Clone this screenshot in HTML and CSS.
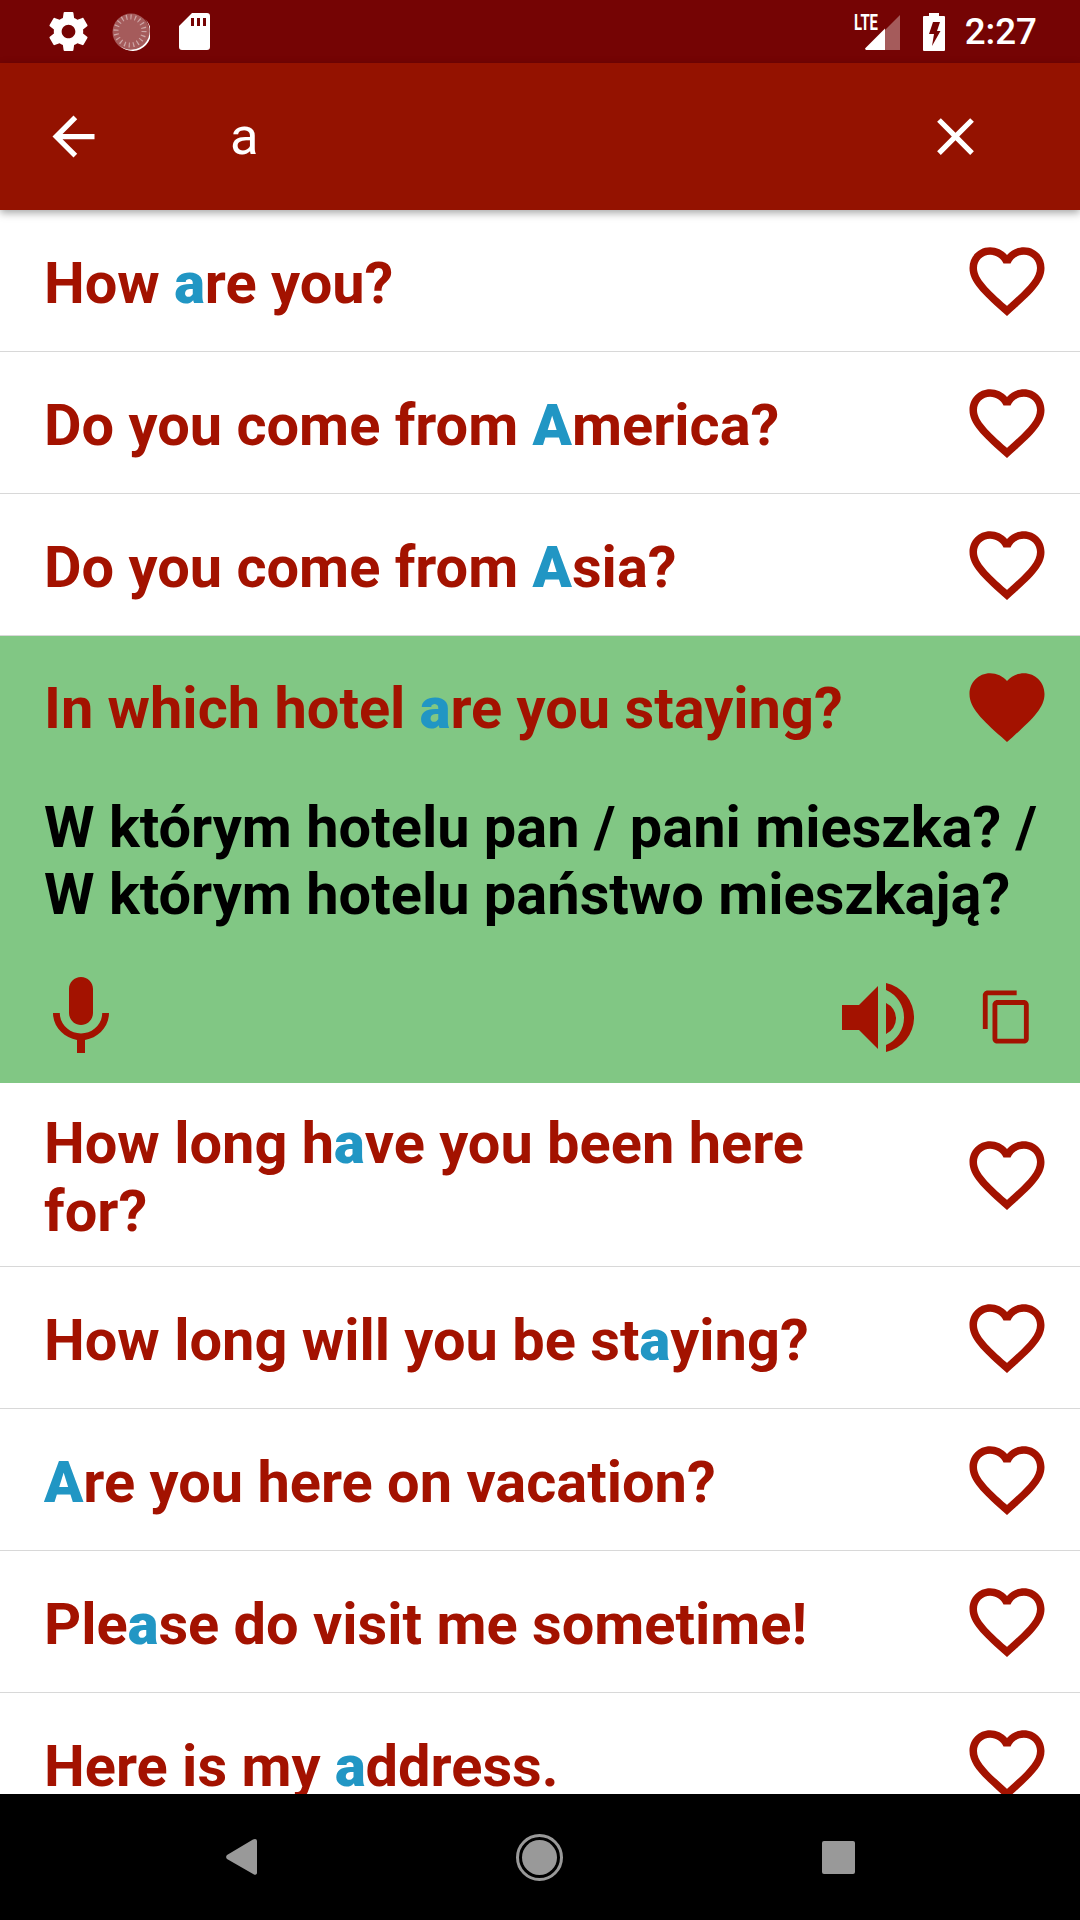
FILE: index.html

```html
<!doctype html>
<html>
<head>
<meta charset="utf-8">
<title>Phrases search</title>
<link rel="stylesheet" href="styles.css">
</head>
<body>
<svg class="defs">
	<symbol id="heart" viewBox="0 0 24 24"><path d="M16.5 3c-1.74 0-3.41.81-4.5 2.09C10.91 3.81 9.24 3 7.5 3 4.42 3 2 5.42 2 8.5c0 3.78 3.4 6.86 8.55 11.54L12 21.35l1.45-1.32C18.6 15.36 22 12.28 22 8.5 22 5.42 19.58 3 16.5 3zm-4.4 15.55l-.1.1-.1-.1C7.14 14.24 4 11.39 4 8.5 4 6.5 5.5 5 7.5 5c1.54 0 3.04.99 3.57 2.36h1.87C13.46 5.99 14.96 5 16.5 5c2 0 3.5 1.5 3.5 3.5 0 2.89-3.14 5.74-7.9 10.05z"/></symbol>
	<symbol id="heart-full" viewBox="0 0 24 24"><path d="M12 21.35l-1.45-1.32C5.4 15.36 2 12.28 2 8.5 2 5.42 4.42 3 7.5 3c1.74 0 3.41.81 4.5 2.09C13.09 3.81 14.76 3 16.5 3 19.58 3 22 5.42 22 8.5c0 3.78-3.4 6.86-8.55 11.54L12 21.35z"/></symbol>
</svg>

<div class="status">
	<svg class="ic-gear" viewBox="0 0 24 24"><path d="M19.43 12.98c.04-.32.07-.64.07-.98s-.03-.66-.07-.98l2.11-1.65c.19-.15.24-.42.12-.64l-2-3.46c-.12-.22-.39-.3-.61-.22l-2.49 1c-.52-.4-1.08-.73-1.69-.98l-.38-2.65C14.46 2.18 14.25 2 14 2h-4c-.25 0-.46.18-.49.42l-.38 2.65c-.61.25-1.17.59-1.69.98l-2.49-1c-.23-.09-.49 0-.61.22l-2 3.46c-.13.22-.07.49.12.64l2.11 1.65c-.04.32-.07.65-.07.98s.03.66.07.98l-2.11 1.65c-.19.15-.24.42-.12.64l2 3.46c.12.22.39.3.61.22l2.49-1c.52.4 1.08.73 1.69.98l.38 2.65c.03.24.24.42.49.42h4c.25 0 .46-.18.49-.42l.38-2.65c.61-.25 1.17-.59 1.69-.98l2.49 1c.23.09.49 0 .61-.22l2-3.46c.12-.22.07-.49-.12-.64l-2.11-1.65zM12 15.5c-1.93 0-3.5-1.57-3.5-3.5s1.57-3.5 3.5-3.5 3.5 1.57 3.5 3.5-1.57 3.5-3.5 3.5z"/></svg>
	<svg class="ic-loader" viewBox="0 0 38 38">
		<circle cx="19" cy="19" r="18.5" fill="#fff" opacity=".35"/>
		<path d="M33 6a18.5 18.5 0 0 1-25 27a17.5 17.5 0 0 0 25-27z" fill="#fff"/>
		<circle cx="18" cy="18" r="14" fill="none" stroke="#fff" stroke-opacity=".45" stroke-width="5" stroke-dasharray="1.2 3.2"/>
	</svg>
	<svg class="ic-sd" viewBox="0 0 31 37"><path fill-rule="evenodd" d="M13 0h15a3 3 0 0 1 3 3v31a3 3 0 0 1-3 3H3a3 3 0 0 1-3-3V13zM12 5v8h3V5zm6 0v8h3V5zm6 0v8h3V5z"/></svg>
	<span class="status-gap"></span>
	<svg class="ic-signal" viewBox="0 -12 46 63">
		<text x="0" y="18" font-size="22" font-weight="700" textLength="24" lengthAdjust="spacingAndGlyphs">LTE</text>
		<path d="M11 38L46 3v35z" opacity=".35"/>
		<path d="M11 36.5l20-20V38H12z"/>
	</svg>
	<svg class="ic-batt" viewBox="0 0 22 38"><path fill-rule="evenodd" d="M6 0h10v3h5a1 1 0 0 1 1 1v33a1 1 0 0 1-1 1H1a1 1 0 0 1-1-1V4a1 1 0 0 1 1-1h5zM10 9L6 21h5L9 33l8.500-15H14l3-9z"/></svg>
	<span class="time">2:27</span>
</div>

<div class="toolbar">
	<svg class="ic-bar" viewBox="0 0 24 24"><path d="M20 11H7.83l5.59-5.59L12 4l-8 8 8 8 1.41-1.41L7.83 13H20v-2z"/></svg>
	<span class="query">a</span>
	<svg class="ic-bar" viewBox="0 0 24 24"><path d="M19 6.41L17.59 5 12 10.59 6.41 5 5 6.41 10.59 12 5 17.59 6.41 19 12 13.41 17.59 19 19 17.59 13.41 12z"/></svg>
</div>

<div class="list">
	<div class="row">
		<div class="title">How <b>a</b>re you?</div>
		<svg class="heart"><use href="#heart"/></svg>
	</div>
	<div class="row">
		<div class="title">Do you come from <b>A</b>merica?</div>
		<svg class="heart"><use href="#heart"/></svg>
	</div>
	<div class="row">
		<div class="title">Do you come from <b>A</b>sia?</div>
		<svg class="heart"><use href="#heart"/></svg>
	</div>
	<div class="open">
		<div class="open-head">
			<div class="title">In which hotel <b>a</b>re you staying?</div>
			<svg class="heart"><use href="#heart-full"/></svg>
		</div>
		<div class="trans">W którym hotelu pan / pani mieszka? / W którym hotelu państwo mieszkają?</div>
		<div class="tools">
			<svg class="ic-mic" viewBox="0 0 24 24"><path d="M12 14c1.66 0 3-1.34 3-3V5c0-1.66-1.34-3-3-3S9 3.34 9 5v6c0 1.66 1.34 3 3 3zm5.3-3c0 3-2.54 5.1-5.3 5.1S6.7 14 6.7 11H5c0 3.41 2.72 6.23 6 6.72V21h2v-3.28c3.28-.48 6-3.3 6-6.72h-1.7z"/></svg>
			<svg class="ic-sound" viewBox="0 0 72 69"><path d="M0 22h17L36 3v63L17 47H0zM44 20A17 17 0 0 1 44 51zM44 0A35.250 35.250 0 0 1 44 69V62A30 30 0 0 0 44 7z"/></svg>
			<svg class="ic-copy" viewBox="0 0 24 24"><path d="M16 1H4c-1.1 0-2 .9-2 2v14h2V3h12V1zm3 4H8c-1.1 0-2 .9-2 2v14c0 1.1.9 2 2 2h11c1.1 0 2-.9 2-2V7c0-1.1-.9-2-2-2zm0 16H8V7h11v14z"/></svg>
		</div>
	</div>
	<div class="row">
		<div class="title">How long h<b>a</b>ve you been here for?</div>
		<svg class="heart"><use href="#heart"/></svg>
	</div>
	<div class="row">
		<div class="title">How long will you be st<b>a</b>ying?</div>
		<svg class="heart"><use href="#heart"/></svg>
	</div>
	<div class="row">
		<div class="title"><b>A</b>re you here on vacation?</div>
		<svg class="heart"><use href="#heart"/></svg>
	</div>
	<div class="row">
		<div class="title">Ple<b>a</b>se do visit me sometime!</div>
		<svg class="heart"><use href="#heart"/></svg>
	</div>
	<div class="row">
		<div class="title">Here is my <b>a</b>ddress.</div>
		<svg class="heart"><use href="#heart"/></svg>
	</div>
</div>

<div class="nav">
	<svg class="nav-back" viewBox="0 0 31 36"><path d="M29 0a2 2 0 0 1 2 2v32a2 2 0 0 1-3 1.5L1 20a3 3 0 0 1 0-4L27 .6z"/></svg>
	<svg class="nav-home" viewBox="0 0 47 47"><circle cx="23.5" cy="23.5" r="22" fill="none" stroke="#999" stroke-width="3"/><circle cx="23.5" cy="23.5" r="17.5"/></svg>
	<span class="nav-recent"></span>
</div>
</body>
</html>
```

FILE: styles.css

```css
*{ margin:0; padding:0; box-sizing:border-box;}
html,body{ width:1080px; height:1920px; overflow:hidden;}
body{ display:flex; flex-direction:column; background:#fff; font-family:Roboto,"Liberation Sans",sans-serif;}
.defs{ display:none;}

.status{ height:63px; flex:none; background:#750404; display:flex; align-items:center; padding:0 43px 0 45px; color:#fff; fill:#fff;}
.status svg{ display:block; flex:none;}
.ic-gear{ width:47px; height:47px;}
.ic-loader{ width:38px; height:38px; margin-left:20px;}
.ic-sd{ width:31px; height:37px; margin-left:29px;}
.status-gap{ flex:1;}
.ic-signal{ width:46px; height:63px;}
.ic-signal text{ font-family:Roboto,sans-serif;}
.ic-batt{ width:22px; height:38px; margin-left:23px;}
.time{ font-size:36.75px; font-weight:500; margin-left:20px;}

.toolbar{ height:147px; flex:none; background:#941200; display:flex; align-items:center; padding:0 93px 0 42px; fill:#fff; position:relative; box-shadow:0 3px 8px rgba(0,0,0,.35);}
.ic-bar{ width:63px; height:63px; flex:none;}
.query{ flex:1; font-size:52.5px; color:#fff; padding-left:125px; line-height:63px;}

.list{ flex:1; min-height:0; overflow:hidden;}
.row{ display:flex; align-items:center; padding:24px 28px 23px 44px; border-bottom:1px solid #d8d8d8; fill:#a31200;}
.title{ flex:1; font-size:57.75px; font-weight:700; line-height:68px; color:#a31200;}
.title b{ color:#2196c4;}
.row .title{ margin:1.5px 0 -1.5px;}
.open .title{ margin:1px 0 -1px;}
.heart{ width:90px; height:90px; flex:none; margin-left:89px;}
.row .heart{ margin-top:2px; margin-bottom:2px;}

.open{ background:#81c784; fill:#a31200; padding:26px 28px 0 44px; height:447px;}
.open-head{ display:flex; align-items:center;}
.trans{ font-size:57.75px; font-weight:700; line-height:67px; color:#000; margin:42px -6px 0 0;}
.tools{ display:flex; align-items:center; margin-top:41px;}
.ic-mic{ width:96px; height:96px; margin-left:-11px;}
.ic-sound{ width:72px; height:69px; margin-left:auto;}
.ic-copy{ width:58px; height:58px; margin-left:64px; margin-right:16px;}

.nav{ height:126px; flex:none; background:#000; display:flex; align-items:center; position:relative; padding-left:226px; fill:#999;}
.nav-back{ width:31px; height:36px;}
.nav-home{ width:47px; height:47px; margin-left:259px;}
.nav-recent{ width:33px; height:33px; margin-left:259px; background:#999; border-radius:2px;}
```
